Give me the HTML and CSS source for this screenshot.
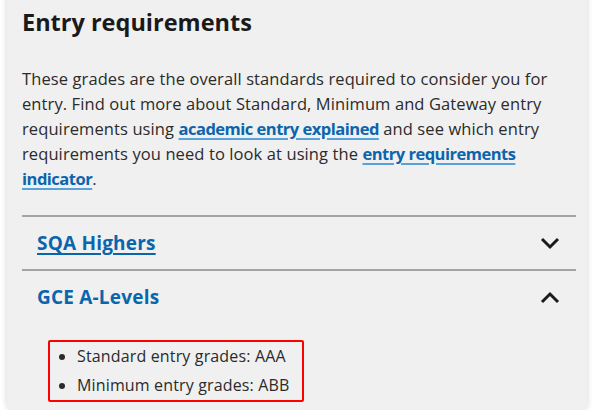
FILE: index.html
```html
<!DOCTYPE html>
<html lang="en">
<head>
    <meta charset="UTF-8">
    <meta name="viewport" content="width=device-width, initial-scale=1.0">
    <link rel="stylesheet" href="styles.css">
</head>
<body>

<div class="card">
    <h2 class="card-title">Entry requirements</h2>
    <p class="intro">
        These grades are the overall standards required to consider you for
        entry. Find out more about Standard, Minimum and Gateway entry
        requirements using <a href="#">academic entry explained</a> and see which entry
        requirements you need to look at using the <a href="#">entry requirements indicator</a>.
    </p>

    <div class="accordion">
        <div class="acc-item">
            <div class="acc-head">
                <a href="#" class="acc-title link">SQA Highers</a>
                <svg class="chevron" width="20" height="13" viewBox="0 0 20 13">
                    <path d="M2 2 L10 10 L18 2" fill="none" stroke="#1a1a1a" stroke-width="3"/>
                </svg>
            </div>
        </div>
        <div class="acc-item open">
            <div class="acc-head">
                <span class="acc-title">GCE A-Levels</span>
                <svg class="chevron" width="20" height="13" viewBox="0 0 20 13">
                    <path d="M2 11 L10 3 L18 11" fill="none" stroke="#1a1a1a" stroke-width="3"/>
                </svg>
            </div>
            <div class="acc-body">
                <ul class="grades">
                    <li>Standard entry grades: AAA</li>
                    <li>Minimum entry grades: ABB</li>
                </ul>
            </div>
        </div>
    </div>
</div>

</body>
</html>
```

FILE: styles.css
```css
body {
    margin: 0;
    background-color: #fff;
    font-family: "Open Sans", Arial, sans-serif;
    color: #2b2b2b;
}

.card {
    width: 580px;
    margin: -10px 0 0 7px;
    padding: 10px 11px 8px 15px;
    box-sizing: border-box;
    background-color: #f0f0f0;
    border-radius: 6px;
    box-shadow: 0 0 6px rgba(0, 0, 0, 0.18);
}

.card-title {
    margin: 0;
    font-size: 23.5px;
    line-height: 44px;
    font-weight: 700;
    color: #1a1a1a;
}

.intro {
    margin: 22px 14px 24px 0;
    font-size: 16.5px;
    line-height: 25px;
    letter-spacing: 0.1px;
}

.intro a {
    color: #0b65ad;
    font-weight: 700;
    letter-spacing: -0.5px;
    text-decoration: underline;
    text-decoration-color: #59a2d8;
    text-decoration-thickness: 2px;
    text-underline-offset: 3px;
}

.acc-item {
    border-top: 2px solid #a3a3a3;
}

.acc-head {
    display: flex;
    align-items: center;
    justify-content: space-between;
    height: 52px;
    padding: 0 16px 0 15px;
}

.acc-title {
    font-size: 19px;
    font-weight: 700;
    letter-spacing: 0.2px;
    color: #0b65ad;
}

.acc-title.link {
    text-decoration: underline;
    text-decoration-thickness: 2px;
    text-underline-offset: 3px;
}

.acc-body {
    display: flex;
    padding: 17px 0 0 26px;
}

.grades {
    margin: 0;
    padding: 0 12px 0 27px;
    border: 2px solid #f00;
    border-radius: 2px;
    font-size: 16px;
    line-height: 29px;
    letter-spacing: 0.15px;
}
```
